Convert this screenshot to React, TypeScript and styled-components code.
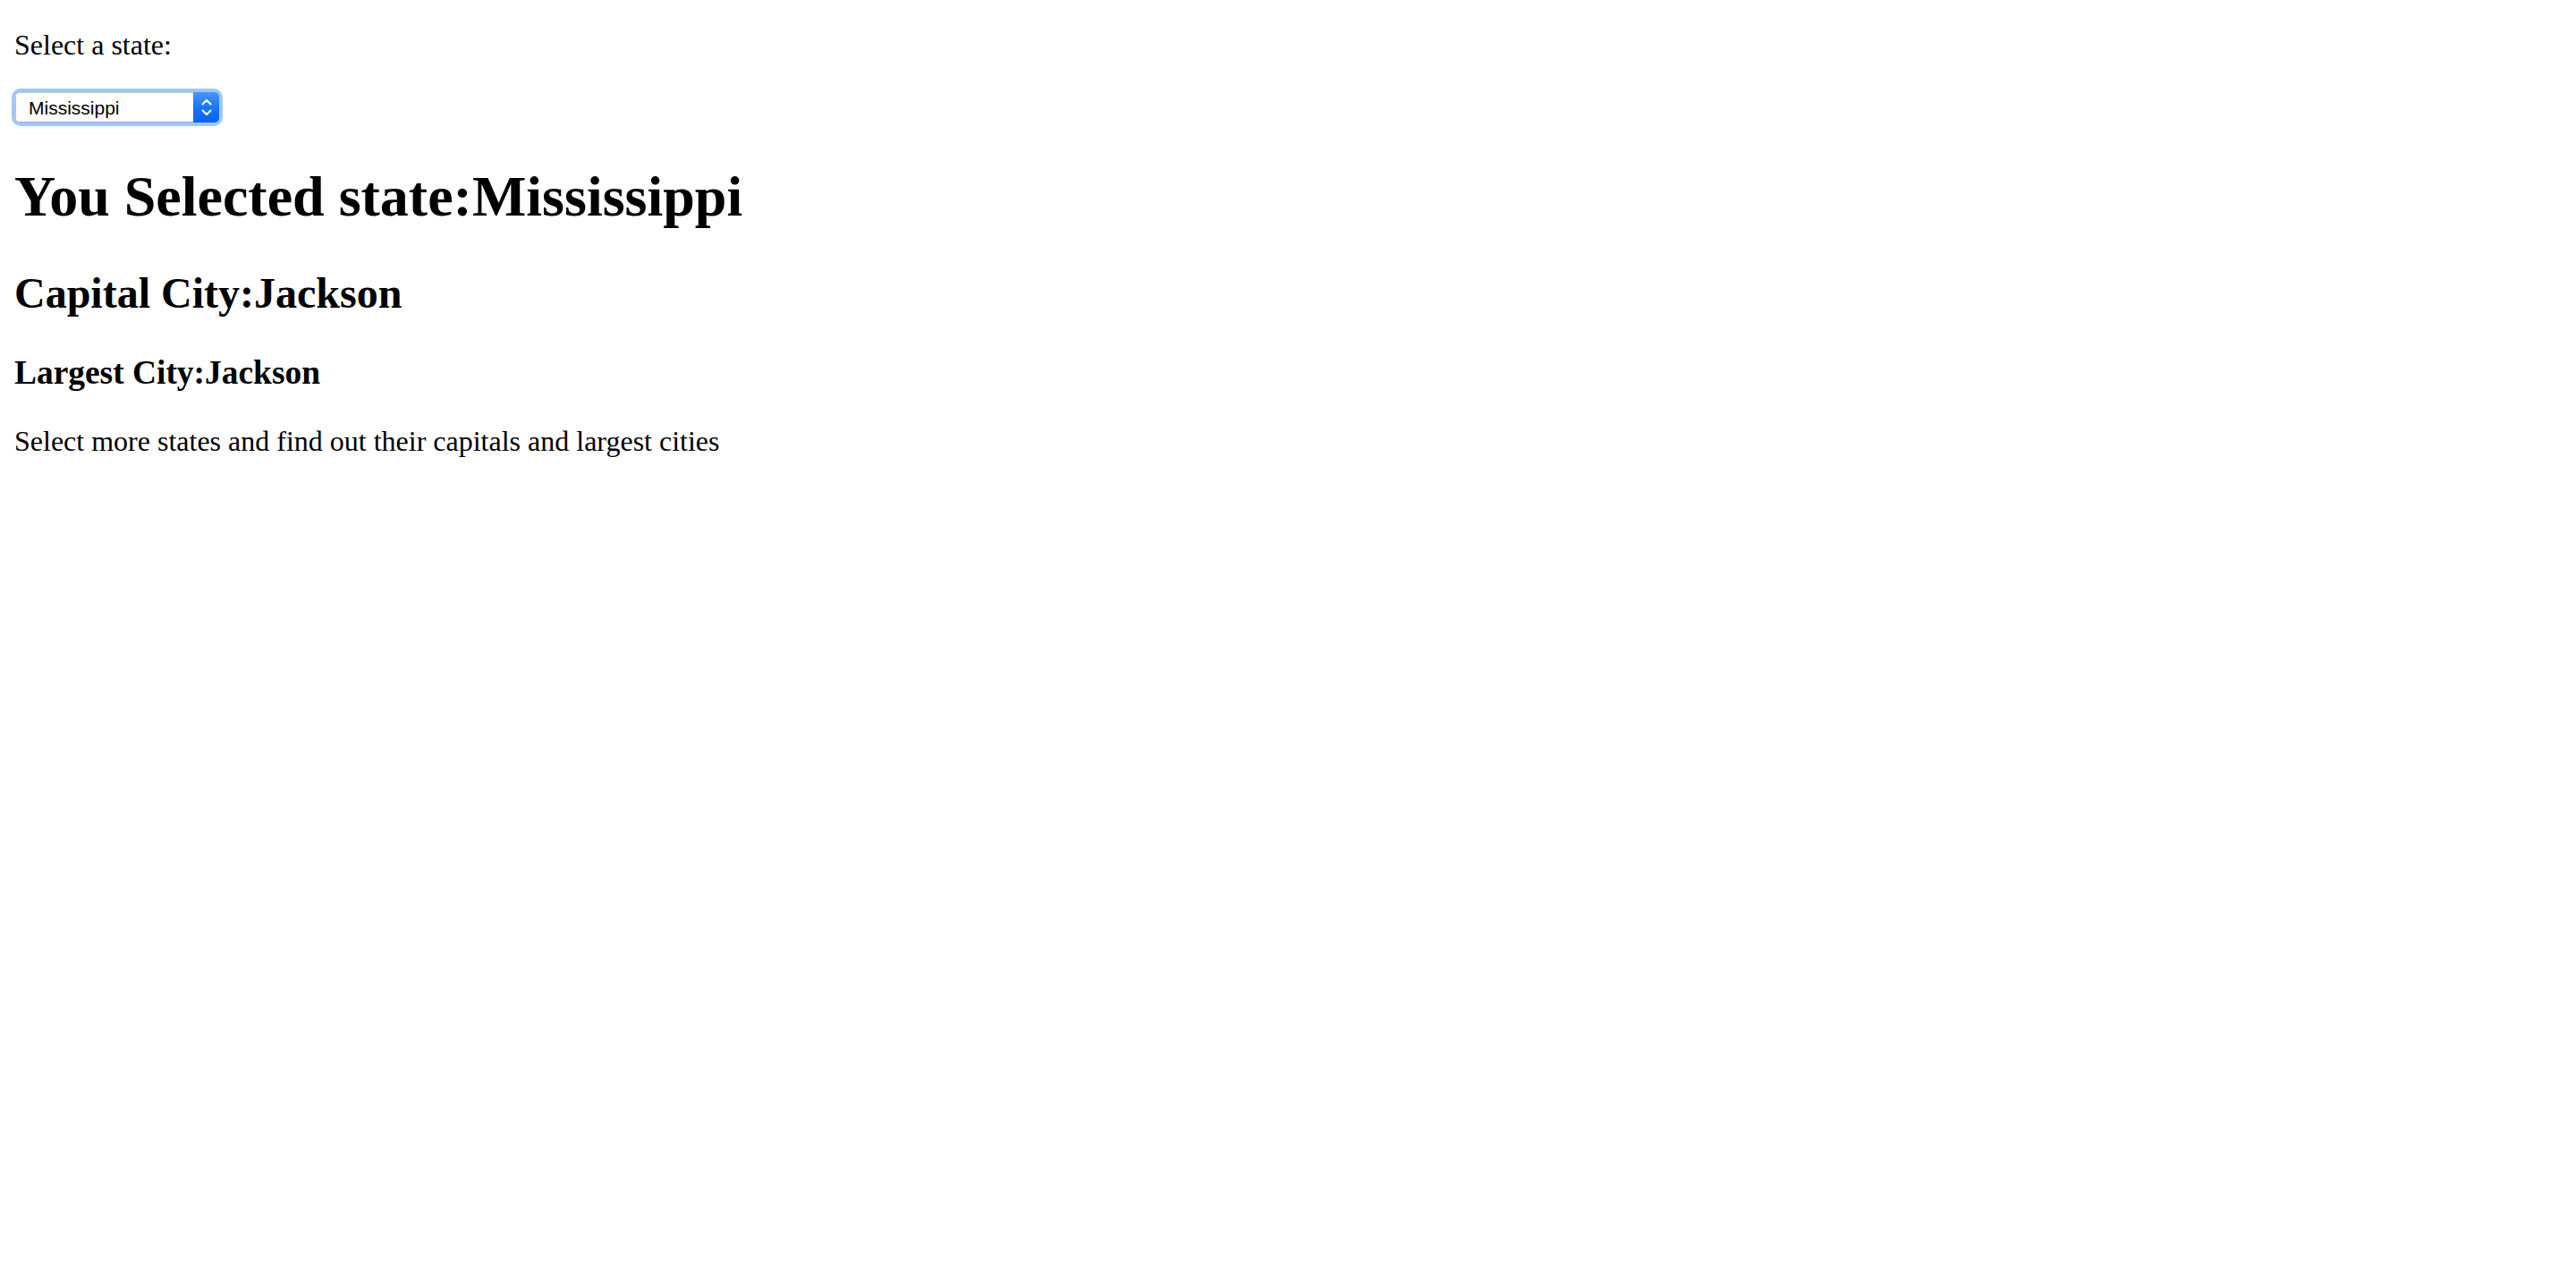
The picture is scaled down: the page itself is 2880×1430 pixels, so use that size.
import React, { useState } from "react";
import styled, { createGlobalStyle } from "styled-components";

const GlobalStyle = createGlobalStyle`
  html, body {
    background: #ffffff;
  }
  body {
    margin: 0;
    font-family: "Liberation Serif", "Times New Roman", serif;
    font-size: 32px;
    color: #000000;
  }
`;

type StateInfo = { name: string; capital: string; largest: string };

const STATES: StateInfo[] = [
  { name: "Alabama", capital: "Montgomery", largest: "Birmingham" },
  { name: "Alaska", capital: "Juneau", largest: "Anchorage" },
  { name: "Arizona", capital: "Phoenix", largest: "Phoenix" },
  { name: "Arkansas", capital: "Little Rock", largest: "Little Rock" },
  { name: "California", capital: "Sacramento", largest: "Los Angeles" },
  { name: "Colorado", capital: "Denver", largest: "Denver" },
  { name: "Florida", capital: "Tallahassee", largest: "Jacksonville" },
  { name: "Georgia", capital: "Atlanta", largest: "Atlanta" },
  { name: "Louisiana", capital: "Baton Rouge", largest: "New Orleans" },
  { name: "Mississippi", capital: "Jackson", largest: "Jackson" },
  { name: "New York", capital: "Albany", largest: "New York City" },
  { name: "Tennessee", capital: "Nashville", largest: "Nashville" },
  { name: "Texas", capital: "Austin", largest: "Houston" },
];

const Page = styled.div`
  display: block;
  padding: 32px 16px 16px;
`;

const Prompt = styled.p`
  margin: 0 0 32px;
  font-size: 32px;
  line-height: normal;
`;

const SelectRow = styled.div`
  display: block;
  padding-top: 2px;
`;

const SelectBox = styled.div`
  position: relative;
  display: inline-block;
  vertical-align: top;
  width: 228px;
  height: 34px;
  margin-left: 1px;
  border-radius: 6px;
  box-shadow: 0 0 0 4px #9fc8f8;
`;

const NativeSelect = styled.select`
  appearance: none;
  -webkit-appearance: none;
  display: block;
  box-sizing: border-box;
  width: 228px;
  height: 34px;
  margin: 0;
  padding: 0 34px 0 14px;
  border: 1px solid #c4c4c4;
  border-bottom-color: #a9a9a9;
  border-radius: 5px;
  background: #ffffff;
  font-family: "Liberation Sans", Arial, sans-serif;
  font-size: 21px;
  color: #000000;
  outline: none;
  cursor: default;
`;

const ArrowCap = styled.span`
  position: absolute;
  top: 0;
  right: 0;
  width: 29px;
  height: 34px;
  display: flex;
  align-items: center;
  justify-content: center;
  border-radius: 0 5px 5px 0;
  background: linear-gradient(180deg, #4a97f8 0%, #1877f7 50%, #0a63ef 100%);
  pointer-events: none;
`;

const Heading1 = styled.h1`
  margin: 42.88px 0;
  font-size: 64px;
  font-weight: bold;
  line-height: normal;
`;

const Heading2 = styled.h2`
  margin: 39.84px 0;
  font-size: 48px;
  font-weight: bold;
  line-height: normal;
`;

const Heading3 = styled.h3`
  margin: 37.44px 0;
  font-size: 37.44px;
  font-weight: bold;
  line-height: normal;
`;

const Note = styled.p`
  margin: 32px 0;
  font-size: 32px;
  line-height: normal;
`;

export default function App() {
  const [selected, setSelected] = useState<string>("Mississippi");
  const info = STATES.find((s) => s.name === selected) ?? STATES[0];

  return (
    <Page>
      <GlobalStyle />
      <Prompt>Select a state:</Prompt>
      <SelectRow>
        <SelectBox>
          <NativeSelect
            value={selected}
            onChange={(e) => setSelected(e.target.value)}
          >
            {STATES.map((s) => (
              <option key={s.name} value={s.name}>
                {s.name}
              </option>
            ))}
          </NativeSelect>
          <ArrowCap>
            <svg width="14" height="22" viewBox="0 0 14 22" fill="none">
              <path
                d="M2.5 7.5 L7 3 L11.5 7.5"
                stroke="#ffffff"
                strokeWidth="2"
                strokeLinecap="round"
                strokeLinejoin="round"
              />
              <path
                d="M2.5 14.5 L7 19 L11.5 14.5"
                stroke="#ffffff"
                strokeWidth="2"
                strokeLinecap="round"
                strokeLinejoin="round"
              />
            </svg>
          </ArrowCap>
        </SelectBox>
      </SelectRow>
      <Heading1>You Selected state:{info.name}</Heading1>
      <Heading2>Capital City:{info.capital}</Heading2>
      <Heading3>Largest City:{info.largest}</Heading3>
      <Note>Select more states and find out their capitals and largest cities</Note>
    </Page>
  );
}
